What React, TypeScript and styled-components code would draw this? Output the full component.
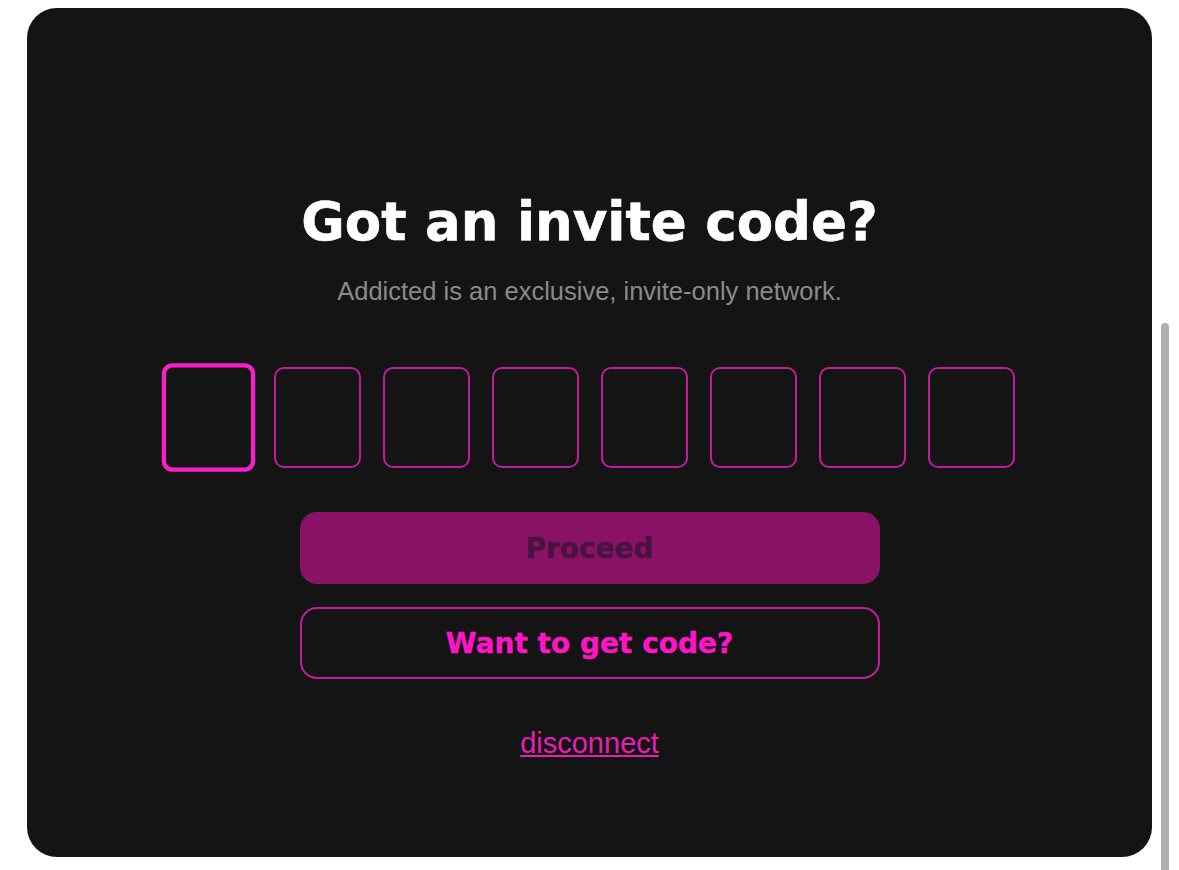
import React, { useState } from "react";
import styled, { createGlobalStyle } from "styled-components";

const GlobalStyle = createGlobalStyle`
  html, body {
    margin: 0;
    padding: 0;
    background: #ffffff;
  }
  body {
    font-family: "Liberation Sans", Arial, sans-serif;
  }
`;

const heavy = `"DejaVu Sans", "Liberation Sans", Arial, sans-serif`;

const Page = styled.div`
  padding: 8px 27px 13px 27px;
`;

const Card = styled.main`
  height: 849px;
  box-sizing: border-box;
  background: #141414;
  border-radius: 30px;
  display: flex;
  flex-direction: column;
  align-items: center;
  padding-top: 182px;
`;

const Title = styled.h1`
  margin: 0;
  color: #ffffff;
  font-family: ${heavy};
  font-size: 53px;
  font-weight: 700;
  line-height: 64px;
  -webkit-text-stroke: 0.6px #ffffff;
`;

const Subtitle = styled.p`
  margin: 22px 0 0;
  color: #8a8a8a;
  font-size: 25.5px;
  line-height: 30px;
`;

const CodeRow = styled.div`
  display: flex;
  gap: 22px;
  margin-top: 61px;
`;

const CodeCell = styled.input<{ $focused?: boolean }>`
  width: 87px;
  height: 101px;
  box-sizing: border-box;
  background: transparent;
  border: 2px solid #c01c9c;
  border-radius: 10px;
  color: #ffffff;
  font-family: ${heavy};
  font-size: 40px;
  text-align: center;
  outline: none;
  ${p =>
    p.$focused &&
    `
    border: 4px solid #f81ec8;
    transform: scale(1.075);
  `}
`;

const Actions = styled.div`
  display: flex;
  flex-direction: column;
  gap: 23px;
  width: 580px;
  margin-top: 44px;
`;

const Button = styled.button<{ $variant: "solid" | "outline" }>`
  height: 72px;
  border-radius: 17px;
  font-family: ${heavy};
  font-size: 28px;
  font-weight: 700;
  cursor: pointer;
  background: ${p => (p.$variant === "solid" ? "#8a1266" : "transparent")};
  color: ${p => (p.$variant === "solid" ? "#46143e" : "#ff14c8")};
  -webkit-text-stroke: 0.4px ${p => (p.$variant === "solid" ? "#46143e" : "#ff14c8")};
  border: ${p => (p.$variant === "solid" ? "none" : "2px solid #c01c9c")};
`;

const Disconnect = styled.a`
  display: block;
  margin-top: 47px;
  color: #e61eb6;
  font-size: 29px;
  line-height: 34px;
  text-decoration: underline;
  cursor: pointer;
`;

const ScrollThumb = styled.div`
  position: fixed;
  right: 10px;
  top: 323px;
  bottom: 0;
  width: 8px;
  border-radius: 4px 4px 0 0;
  background: #b0b0b0;
`;

const CELLS = 8;

export default function App() {
  const [code, setCode] = useState<string[]>(Array(CELLS).fill(""));

  const update = (i: number, v: string) => {
    const next = [...code];
    next[i] = v.slice(-1);
    setCode(next);
  };

  return (
    <>
      <GlobalStyle />
      <Page>
        <Card>
          <Title>Got an invite code?</Title>
          <Subtitle>Addicted is an exclusive, invite-only network.</Subtitle>
          <CodeRow>
            {code.map((c, i) => (
              <CodeCell
                key={i}
                value={c}
                maxLength={1}
                $focused={i === 0}
                onChange={e => update(i, e.target.value)}
              />
            ))}
          </CodeRow>
          <Actions>
            <Button $variant="solid" disabled>
              Proceed
            </Button>
            <Button $variant="outline">Want to get code?</Button>
          </Actions>
          <Disconnect>disconnect</Disconnect>
        </Card>
      </Page>
      <ScrollThumb />
    </>
  );
}
